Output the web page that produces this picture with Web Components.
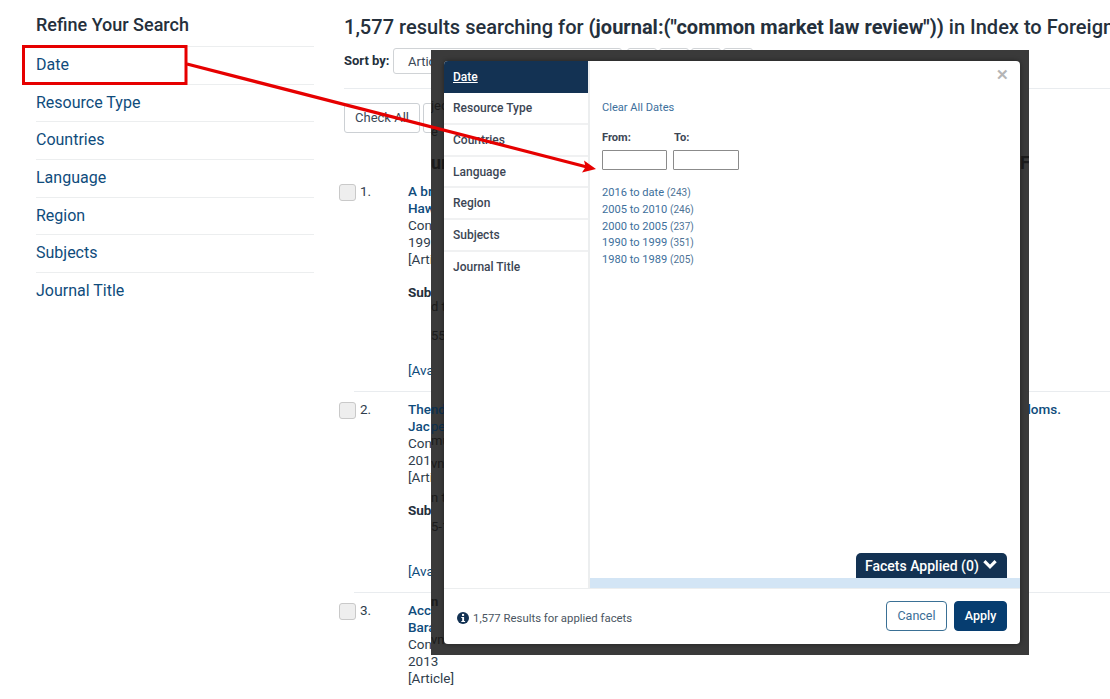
<!DOCTYPE html>
<html>
<head>
<meta charset="utf-8">
<title>Refine Your Search</title>
<style>
  html, body { margin: 0; height: 100%; overflow: hidden; background: #fff; }
  body { font-family: Roboto, "Liberation Sans", sans-serif; color: #25303c; }
</style>
</head>
<body>
<search-page></search-page>

<script>
class FacetSidebar extends HTMLElement {
  constructor() {
    super();
    this._shadowRoot = this.attachShadow({ mode: "open" });
    const items = ["Date", "Resource Type", "Countries", "Language", "Region", "Subjects", "Journal Title"];
    this._shadowRoot.innerHTML = `
      <style>
        :host { display: block; width: 278px; flex: none; margin-left: 36px; padding-top: 14px; }
        h2 { margin: 0; font-size: 18px; line-height: 22px; font-weight: 500; color: #25303c; padding-bottom: 10px; }
        a {
          display: block;
          border-top: 1px solid #eceeef;
          height: 36.7px;
          line-height: 35px;
          font-size: 16px;
          color: #0f4c7c;
          text-decoration: none;
        }
      </style>
      <h2>Refine Your Search</h2>
      ${items.map((item) => `<a href="#">${item}</a>`).join("")}
    `;
  }
}

class ResultItem extends HTMLElement {
  constructor() {
    super();
    this._shadowRoot = this.attachShadow({ mode: "open" });
    this._shadowRoot.innerHTML = `
      <style>
        :host { display: block; margin-left: -5px; font-size: 13.5px; line-height: 17px; color: #2f3d4c; }
        .sep { border-top: 1px solid #e9ecef; margin-left: 15px; height: 9px; }
        .row { display: grid; grid-template-columns: 21px 48px 1fr; padding-bottom: 12px; }
        .check {
          width: 15px;
          height: 15px;
          margin-top: 1px;
          background: #eeeeee;
          border: 1px solid #c9c9c9;
          border-radius: 3px;
        }
        .num { color: #2f3d4c; }
        ::slotted(.title) { color: #0f4c7c; font-weight: 500; display: flex; justify-content: space-between; padding-right: 49px; }
        ::slotted(.subj) { font-weight: 700; color: #25303c; margin-top: 16px; }
        ::slotted(.avail) { color: #0f4c7c; margin-top: var(--avail-gap, 61px); }
      </style>
      <div class="sep"></div>
      <div class="row">
        <div class="check"></div>
        <div class="num">${this.getAttribute("num")}.</div>
        <div><slot></slot></div>
      </div>
    `;
    if (this.hasAttribute("no-sep")) {
      this._shadowRoot.querySelector(".sep").style.borderTopColor = "transparent";
    }
  }
}

class ResultsPane extends HTMLElement {
  constructor() {
    super();
    this._shadowRoot = this.attachShadow({ mode: "open" });
    this._shadowRoot.innerHTML = `
      <style>
        :host { display: block; flex: 1; min-width: 0; padding: 15px 0 0 5px; margin-left: 25px; white-space: nowrap; overflow: hidden; }
        h1 { margin: 0; font-size: 20px; line-height: 24px; font-weight: 500; color: #25303c; letter-spacing: .015px; }
        h1 b { font-weight: 700; }
        .sort { display: flex; align-items: flex-start; margin-top: 9px; height: 26px; font-size: 13px; }
        .sort label { font-weight: 700; line-height: 26px; width: 49px; color: #25303c; }
        .select {
          box-sizing: border-box;
          width: 229px;
          height: 26px;
          border: 1px solid #d0d3d6;
          border-radius: 3px;
          padding-left: 14px;
          line-height: 25px;
          color: #3a4857;
          font-size: 13px;
        }
        .mini { box-sizing: border-box; width: 30px; height: 26px; border: 1px solid #d0d3d6; border-radius: 3px; margin-left: 2px; }
        .select + .mini { margin-left: 5px; }
        hr { border: 0; border-top: 1px solid #e9ecef; margin: 14px 0 0; }
        .tools { display: flex; gap: 3px; margin-top: 14px; }
        .btn {
          box-sizing: border-box;
          width: 76px;
          height: 30px;
          border: 1px solid #ccd0d4;
          border-radius: 3px;
          font-size: 13px;
          line-height: 28px;
          text-align: center;
          color: #3a4857;
        }
        .list { margin-top: 40px; }
      </style>
      <h1>1,577 results searching for <b>(journal:("common market law review"))</b> in Index to Foreign Legal Periodicals</h1>
      <div class="sort">
        <label>Sort by:</label>
        <div class="select">Artic</div>
        <div class="mini"></div><div class="mini"></div><div class="mini"></div><div class="mini"></div>
      </div>
      <hr>
      <div class="tools"><div class="btn">Check All</div><div class="btn"></div></div>
      <div class="list"><slot></slot></div>
    `;
  }
}

class FacetDialog extends HTMLElement {
  constructor() {
    super();
    this._shadowRoot = this.attachShadow({ mode: "open" });
    const nav = ["Resource Type", "Countries", "Language", "Region", "Subjects", "Journal Title"];
    const dates = [
      ["2016 to date", 243],
      ["2005 to 2010", 246],
      ["2000 to 2005", 237],
      ["1990 to 1999", 351],
      ["1980 to 1989", 205],
    ];
    this._shadowRoot.innerHTML = `
      <style>
        :host {
          position: absolute;
          left: 431px;
          top: 50px;
          width: 598px;
          height: 605px;
          box-sizing: border-box;
          padding: 11px 9px 11px 13px;
          background: #3a3a3a;
          display: flex;
          font-size: 12px;
          color: #3c4654;
        }
        .dialog {
          flex: 1;
          display: flex;
          flex-direction: column;
          background: #fff;
          border-radius: 4px;
          box-shadow: 0 0 5px rgba(0,0,0,.45);
          overflow: hidden;
          position: relative;
        }
        .body { flex: 1; display: flex; min-height: 0; }
        nav { width: 144px; flex: none; font-weight: 500; }
        nav a {
          display: block;
          height: 29.8px;
          padding: 0 0 0 9px;
          line-height: 30px;
          border-bottom: 2px solid #f0f1f2;
          color: #3c4654;
          text-decoration: none;
        }
        nav a:last-child { border-bottom-color: transparent; }
        nav a.on {
          height: 32px;
          line-height: 32px;
          border: 0;
          background: #133253;
          color: #fff;
          text-decoration: underline;
        }
        .pane { flex: 1; display: flex; flex-direction: column; border-left: 2px solid #eceeef; position: relative; }
        .content { flex: 1; padding: 40px 0 0 12px; font-size: 11.1px; }
        .close { position: absolute; right: 11px; top: 6px; color: #b5b5b5; font-size: 15px; line-height: 16px; font-weight: 700; }
        .clear { color: #3d6f9c; line-height: 14px; display: block; }
        .labels { display: flex; margin-top: 16px; font-weight: 700; line-height: 14px; color: #3c4654; }
        .labels span { width: 72px; }
        .inputs { display: flex; gap: 6px; margin-top: 5px; }
        input { box-sizing: border-box; width: 66px; height: 20px; margin: 0; padding: 0; background: #fff; border: 1px solid #8b8b8b; border-radius: 1px; }
        input:first-child { width: 65px; }
        .dates { margin-top: 15px; line-height: 16.75px; color: #3d6f9c; }
        .dates small { font-size: 10px; color: #4d7396; }
        .tabwrap { display: flex; justify-content: flex-end; padding-right: 13px; }
        .tab {
          width: 151px;
          height: 25px;
          box-sizing: border-box;
          background: #133253;
          color: #fff;
          border-radius: 5px 5px 0 0;
          font-size: 14px;
          font-weight: 500;
          line-height: 26px;
          padding-left: 9px;
          display: flex;
          align-items: flex-start;
          gap: 3px;
        }
        .tab svg { margin-top: 6px; }
        .bar { height: 10px; background: #d3e5f5; }
        footer {
          height: 55px;
          flex: none;
          display: flex;
          align-items: center;
          padding: 0 13px;
          border-top: 1px solid #eceeef;
          font-size: 11.35px;
          color: #4a5561;
        }
        .info { display: flex; align-items: center; gap: 4px; flex: 1; margin-top: 3px; }
        .cancel, .apply {
          box-sizing: border-box;
          height: 30px;
          border-radius: 4px;
          font-size: 12.5px;
          line-height: 27px;
          text-align: center;
          margin-top: -1px;
        }
        .cancel { width: 61px; border: 1px solid #3a7095; color: #3a6e96; margin-right: 7px; }
        .apply { width: 53px; background: #063d70; border: 1px solid #063d70; color: #fff; font-weight: 500; }
        .behind { position: absolute; left: 0; width: 13px; color: #1b1b1b; font-size: 13px; line-height: 17px; white-space: nowrap; overflow: hidden; }
        .behind.big { font-size: 18px; font-weight: 700; line-height: 22px; }
      </style>
      <div class="behind" style="top:47px">jec</div>
      <div class="behind" style="top:73px">e</div>
      <div class="behind big" style="top:102px">ur</div>
      <div class="behind" style="top:248px">d t</div>
      <div class="behind" style="top:277px">55-</div>
      <div class="behind" style="top:351px;color:#0c2f4e;font-weight:500">nd</div>
      <div class="behind" style="top:368px;color:#0c2f4e">pe</div>
      <div class="behind" style="top:382px">mu</div>
      <div class="behind" style="top:405px">vnl</div>
      <div class="behind" style="top:439px">n t</div>
      <div class="behind" style="top:468px">5-1</div>
      <div class="behind" style="top:543px;font-weight:700">n</div>
      <div class="behind" style="top:581px">vnl</div>
      <div class="behind big" style="left:auto;right:0;top:102px;width:9px">F</div>
      <div class="dialog">
        <div class="body">
          <nav>
            <a class="on" href="#">Date</a>
            ${nav.map((item) => `<a href="#">${item}</a>`).join("")}
          </nav>
          <div class="pane">
            <div class="close">&#10005;</div>
            <div class="content">
              <span class="clear">Clear All Dates</span>
              <div class="labels"><span>From:</span><span>To:</span></div>
              <div class="inputs"><input type="text"><input type="text"></div>
              <div class="dates">
                ${dates.map(([label, count]) => `<div>${label} <small>(${count})</small></div>`).join("")}
              </div>
            </div>
            <div class="tabwrap">
              <div class="tab">Facets Applied (0)
                <svg width="16" height="11" viewBox="0 0 16 11"><path d="M2.4 2.2 8 7.8l5.6-5.6" fill="none" stroke="#fff" stroke-width="3.2"/></svg>
              </div>
            </div>
            <div class="bar"></div>
          </div>
        </div>
        <footer>
          <div class="info">
            <svg width="12" height="12" viewBox="0 0 12 12">
              <circle cx="6" cy="6" r="6" fill="#133253"/>
              <rect x="5" y="1.9" width="2.1" height="2" fill="#fff"/>
              <path d="M4.3 5h2.8v4h1v1.1H4.3V9h.9V6.1h-.9z" fill="#fff"/>
            </svg>
            <span>1,577 Results for applied facets</span>
          </div>
          <div class="cancel">Cancel</div>
          <div class="apply">Apply</div>
        </footer>
      </div>
    `;
  }
}

class CalloutArrow extends HTMLElement {
  constructor() {
    super();
    this._shadowRoot = this.attachShadow({ mode: "open" });
    this._shadowRoot.innerHTML = `
      <style>
        :host { position: absolute; left: 0; top: 0; width: 1110px; height: 699px; pointer-events: none; }
        svg { display: block; }
      </style>
      <svg width="1110" height="699" viewBox="0 0 1110 699">
        <rect x="23.5" y="46.5" width="162.5" height="37" fill="none" stroke="#e60000" stroke-width="3"/>
        <line x1="187" y1="64" x2="587" y2="167" stroke="#e60000" stroke-width="3.2"/>
        <path d="M596 169 582 172.6 585.6 167 584 160.6z" fill="#e60000"/>
      </svg>
    `;
  }
}

class SearchPage extends HTMLElement {
  constructor() {
    super();
    this._shadowRoot = this.attachShadow({ mode: "open" });
    this._shadowRoot.innerHTML = `
      <style>
        :host { display: block; position: relative; width: 1110px; height: 699px; overflow: hidden; }
        .columns { display: flex; height: 100%; }
      </style>
      <div class="columns">
        <facet-sidebar></facet-sidebar>
        <results-pane>
          <result-item num="1" no-sep>
            <div class="title">A br</div>
            <div class="title">Haw</div>
            <div>Con</div>
            <div>199</div>
            <div>[Arti</div>
            <div class="subj">Sub</div>
            <div class="avail">[Ava</div>
          </result-item>
          <result-item num="2" style="--avail-gap:44px">
            <div class="title"><span>The</span><span>doms.</span></div>
            <div class="title">Jac</div>
            <div>Con</div>
            <div>201</div>
            <div>[Arti</div>
            <div class="subj">Sub</div>
            <div class="avail">[Ava</div>
          </result-item>
          <result-item num="3">
            <div class="title">Acc</div>
            <div class="title">Bara</div>
            <div>Con</div>
            <div>2013</div>
            <div>[Article]</div>
          </result-item>
        </results-pane>
      </div>
      <facet-dialog></facet-dialog>
      <callout-arrow></callout-arrow>
    `;
  }
}

customElements.define("facet-sidebar", FacetSidebar);
customElements.define("result-item", ResultItem);
customElements.define("results-pane", ResultsPane);
customElements.define("facet-dialog", FacetDialog);
customElements.define("callout-arrow", CalloutArrow);
customElements.define("search-page", SearchPage);
</script>
</body>
</html>
